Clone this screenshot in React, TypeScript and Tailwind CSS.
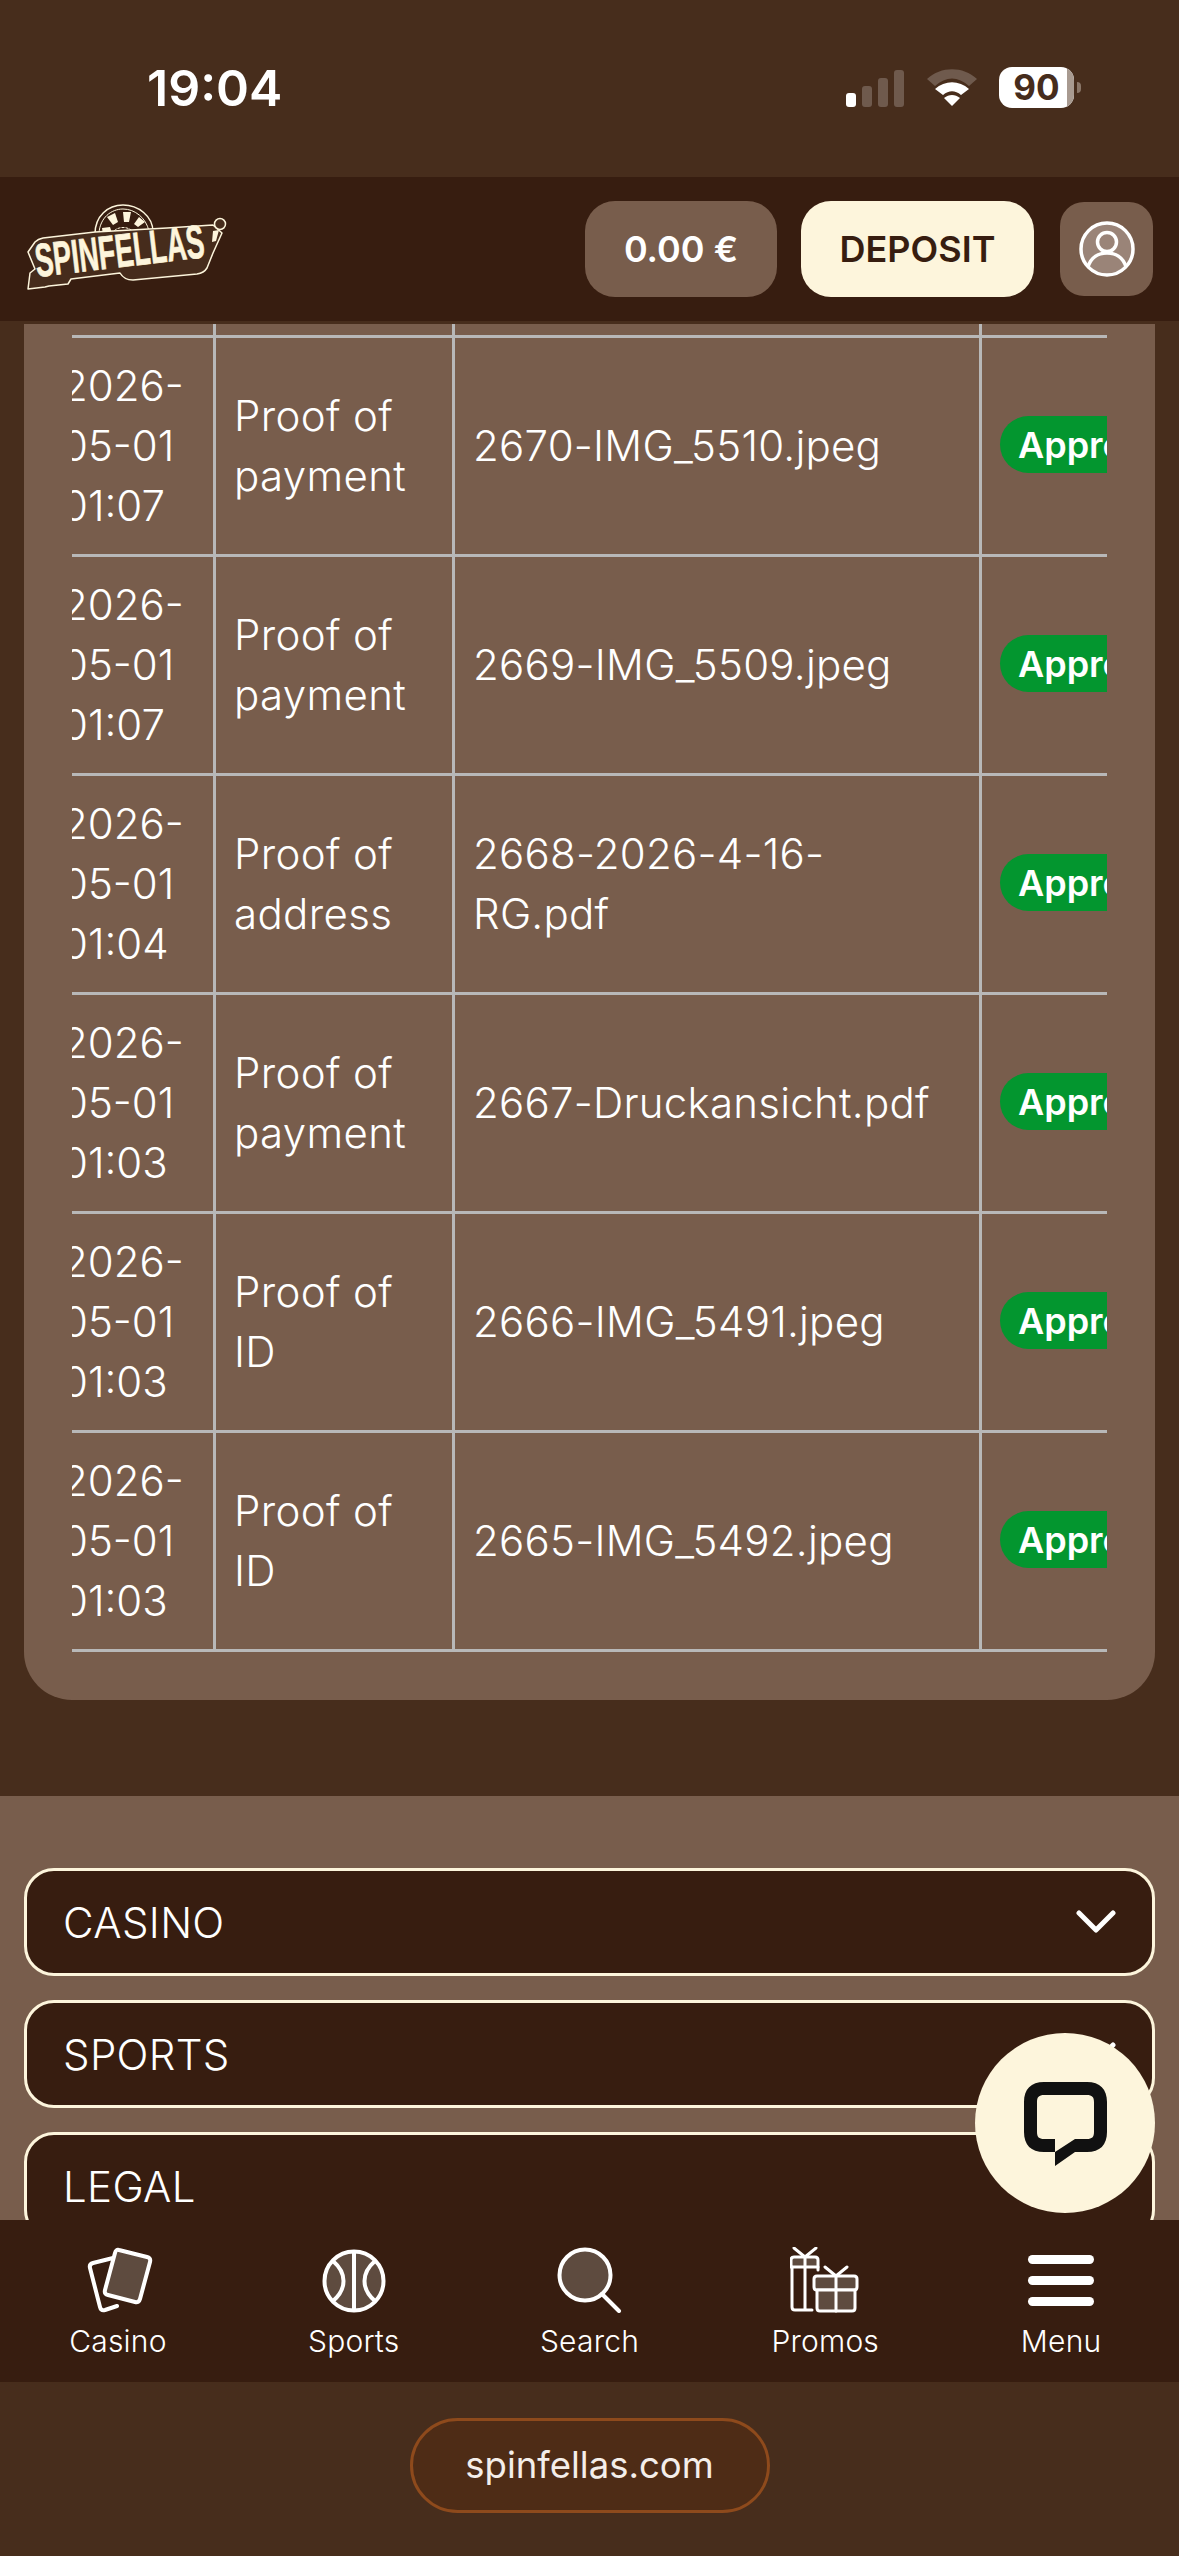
const font = "font-['Inter',sans-serif]";

const rows = [
  { date: "2026-05-01 01:07", type: "Proof of payment", file: ["2670-IMG_5510.jpeg"] },
  { date: "2026-05-01 01:07", type: "Proof of payment", file: ["2669-IMG_5509.jpeg"] },
  { date: "2026-05-01 01:04", type: "Proof of address", file: ["2668-2026-4-16-", "RG.pdf"] },
  { date: "2026-05-01 01:03", type: "Proof of payment", file: ["2667-Druckansicht.pdf"] },
  { date: "2026-05-01 01:03", type: "Proof of ID", file: ["2666-IMG_5491.jpeg"] },
  { date: "2026-05-01 01:03", type: "Proof of ID", file: ["2665-IMG_5492.jpeg"] },
];

function StatusIcons() {
  return (
    <div className="flex items-center">
      <svg width="58" height="38" viewBox="0 0 58 38" className="mr-[23px]">
        <rect x="0" y="24" width="10" height="14" rx="3" fill="#ffffff" />
        <rect x="16" y="17" width="10" height="21" rx="3" fill="#6f5a4d" />
        <rect x="32" y="9" width="10" height="29" rx="3" fill="#6f5a4d" />
        <rect x="48" y="1" width="10" height="37" rx="3" fill="#6f5a4d" />
      </svg>
      <svg width="50" height="38" viewBox="0 0 50 38" className="mr-[22px]">
        <path d="M0 10C14-3 36-3 50 10L42 17C31 7 19 7 8 17Z" fill="#6f5a4d" />
        <path d="M8 20C18 11 32 11 42 20L34 26C28 21 22 21 16 26Z" fill="#ffffff" />
        <path d="M17 29C22 25 28 25 33 29L25 37Z" fill="#ffffff" />
      </svg>
      <div className="relative flex h-[41px] w-[75px] items-center justify-center overflow-hidden rounded-[13px] bg-white">
        <div className="absolute inset-y-0 right-0 w-[7px] bg-[#a89a90]" />
        <span className="relative text-[35px] font-bold leading-none text-[#462c1c]">90</span>
      </div>
      <div className="ml-[3px] h-[11px] w-[4px] rounded-r-full bg-[#8a7668]" />
    </div>
  );
}

function Logo() {
  return (
    <svg width="204" height="90" viewBox="0 0 204 90">
      <path d="M68 30C68 12 81 1 96 1s30 11 30 27z" fill="#371d10" stroke="#fdf5dc" strokeWidth="1.5" />
      <path d="M72 29C73 14 84 5 96 5s23 9 26 22" fill="none" stroke="#fdf5dc" strokeWidth="1" />
      <path d="M75 24l8-1 2 6-9 2zM80 13l8-4 3 9-5 3zM96 8h8l-2 10h-5zM112 13l6 5-7 5-4-3z" fill="#fdf5dc" />
      <path d="M85 30c3-8 17-9 22-1" fill="none" stroke="#fdf5dc" strokeWidth="1" strokeDasharray="3 1" />
      <path
        d="M1 85L3 69L8 65L1 48L8 38Q11 35 16 34L68 28L140 24L186 21L195 29L186 49L180 64Q177 69 170 70L106 76Q97 76 93 69L44 75L41 80L22 82L18 83Z"
        fill="#462c1c"
        stroke="#fdf5dc"
        strokeWidth="1.5"
        strokeLinejoin="round"
      />
      <circle cx="193" cy="20" r="5.5" fill="#462c1c" stroke="#fdf5dc" strokeWidth="1.5" />
      <path d="M186 27l6-1-3 11-4 1z" fill="#fdf5dc" />
      <text
        x="10"
        y="73"
        transform="rotate(-6.7 10 73)"
        textLength="170"
        lengthAdjust="spacingAndGlyphs"
        fontFamily="'Liberation Sans',sans-serif"
        fontWeight="700"
        fontSize="47"
        fill="#fdf5dc"
        stroke="#fdf5dc"
        strokeWidth="0.7"
      >
        SPINFELLAS
      </text>
    </svg>
  );
}

function CasinoIcon() {
  return (
    <svg width="66" height="66" viewBox="0 0 66 66" fill="none" stroke="#ffffff" strokeWidth="4" strokeLinecap="round" strokeLinejoin="round" className="overflow-visible">
      <path d="M28 11L8 16Q4 17 5 21L15 60Q16 64 20 63L32 59" />
      <path d="M34 3L62 10Q66 11 65 15L55 52Q54 56 50 55L23 48Q19 47 20 43L30 6Q31 2 34 3Z" fill="#5e4b3f" />
    </svg>
  );
}

function SportsIcon() {
  return (
    <svg width="66" height="66" viewBox="0 0 66 66" fill="#5e4b3f" stroke="#ffffff" strokeWidth="4">
      <circle cx="33" cy="34" r="29.5" />
      <path d="M33 4v60M12 14c14 12 14 28 0 40M54 14c-14 12-14 28 0 40" fill="none" />
    </svg>
  );
}

function SearchIcon() {
  return (
    <svg width="66" height="66" viewBox="0 0 66 66" stroke="#ffffff" strokeWidth="4" strokeLinecap="round">
      <circle cx="29" cy="28" r="25.5" fill="#5e4b3f" />
      <path d="M46 47l17 17" fill="none" />
    </svg>
  );
}

function PromosIcon() {
  return (
    <svg width="70" height="66" viewBox="0 0 70 66" fill="none" stroke="#ffffff" strokeWidth="3" strokeLinecap="round" strokeLinejoin="round">
      <path d="M4 10H25Q28 10 28 13V20H1V13Q1 10 4 10Z" fill="#5e4b3f" />
      <path d="M2 20V60Q2 63 5 63H22M15 10V63M4 1L15 10L26 1M28 20V23" />
      <path d="M27 29H64Q67 29 67 32V40Q67 43 64 43H27Q24 43 24 40V32Q24 29 27 29Z" fill="#5e4b3f" />
      <path d="M27 43H65V61Q65 64 62 64H30Q27 64 27 61Z" fill="#5e4b3f" />
      <path d="M46 29V64M35 20L46 29L57 20" />
    </svg>
  );
}

function MenuIcon() {
  return (
    <div className="flex h-[66px] w-[66px] flex-col justify-center gap-[12px]">
      <div className="h-[9px] rounded-full bg-white" />
      <div className="h-[9px] rounded-full bg-white" />
      <div className="h-[9px] rounded-full bg-white" />
    </div>
  );
}

function Chevron() {
  return (
    <svg width="40" height="24" viewBox="0 0 40 24" fill="none" stroke="#ffffff" strokeWidth="5" strokeLinecap="round" strokeLinejoin="round">
      <path d="M3 3l17 17L37 3" />
    </svg>
  );
}

const navItems = [
  { label: "Casino", icon: <CasinoIcon /> },
  { label: "Sports", icon: <SportsIcon /> },
  { label: "Search", icon: <SearchIcon /> },
  { label: "Promos", icon: <PromosIcon /> },
  { label: "Menu", icon: <MenuIcon /> },
];

export default function App() {
  return (
    <div className={`relative flex h-[2556px] w-[1179px] flex-col overflow-hidden bg-[#472d1c] text-white ${font}`}>
      {/* Status bar */}
      <div className="flex h-[177px] shrink-0 items-start justify-between pl-[147px] pr-[98px] pt-[61px]">
        <span className="text-[50px] font-semibold leading-[54px]">19:04</span>
        <div className="pt-[6px]">
          <StatusIcons />
        </div>
      </div>

      {/* Header */}
      <header className="flex h-[144px] shrink-0 items-center bg-[#371d10] pl-[27px] pr-[26px]">
        <Logo />
        <div className="ml-auto flex items-center">
          <div className="flex h-[96px] w-[192px] items-center justify-center rounded-[30px] bg-[#785d4c] text-[36px] font-semibold">
            0.00 €
          </div>
          <div className="ml-[24px] flex h-[96px] w-[233px] items-center justify-center rounded-[30px] bg-[#fdf5dc] text-[36px] font-semibold text-[#371d10]">
            DEPOSIT
          </div>
          <div className="ml-[26px] flex h-[94px] w-[93px] items-center justify-center rounded-[24px] bg-[#785d4c]">
            <svg width="56" height="56" viewBox="0 0 56 56" fill="#9a8478" stroke="#ffffff" strokeWidth="3.5">
              <circle cx="28" cy="28" r="26" />
              <circle cx="28" cy="21" r="9.5" fill="none" />
              <path d="M9 46c3-10 11-14 19-14s16 4 19 14" fill="none" />
            </svg>
          </div>
        </div>
      </header>

      {/* Scrolled page content */}
      <main className="min-h-0 flex-1 overflow-hidden pt-[3px]">
        <div className="mx-[24px] rounded-b-[48px] bg-[#785d4c] px-[48px] pb-[48px]">
          <div className="overflow-hidden">
            <table className="-ml-[28px] w-[1104px] table-fixed border-separate border-spacing-0 text-[42px] font-[350] leading-[60px]">
              <colgroup>
                <col className="w-[172px]" />
                <col className="w-[239px]" />
                <col className="w-[527px]" />
                <col className="w-[166px]" />
              </colgroup>
              <tbody>
                <tr>
                  <td className="h-[14px] border-b-[3px] border-r-[3px] border-[#b8b8b8] p-0" />
                  <td className="h-[14px] border-b-[3px] border-r-[3px] border-[#b8b8b8] p-0" />
                  <td className="h-[14px] border-b-[3px] border-r-[3px] border-[#b8b8b8] p-0" />
                  <td className="h-[14px] border-b-[3px] border-[#b8b8b8] p-0" />
                </tr>
                {rows.map((row) => (
                  <tr key={row.file[0]}>
                    <td className="h-[219px] border-b-[3px] border-r-[3px] border-[#b8b8b8] py-0 pl-[18px] pr-[18px] align-middle tracking-[0px]">
                      {row.date}
                    </td>
                    <td className="border-b-[3px] border-r-[3px] border-[#b8b8b8] px-[18px] py-0 align-middle tracking-[0.35px]">
                      {row.type}
                    </td>
                    <td className="border-b-[3px] border-r-[3px] border-[#b8b8b8] px-[18px] py-0 align-middle tracking-[0.25px]">
                      {row.file.map((part) => (
                        <div key={part}>{part}</div>
                      ))}
                    </td>
                    <td className="border-b-[3px] border-[#b8b8b8] py-0 pl-[18px] align-middle">
                      <span className="mb-[3px] flex h-[57px] w-fit items-center rounded-full bg-[#03962f] px-[18px] text-[36px] font-semibold">
                        Approved
                      </span>
                    </td>
                  </tr>
                ))}
              </tbody>
            </table>
          </div>
        </div>

        {/* Footer accordions */}
        <div className="mt-[96px] flex h-[600px] flex-col gap-[24px] bg-[#785d4c] px-[24px] pt-[72px]">
          {["CASINO", "SPORTS", "LEGAL"].map((label) => (
            <div
              key={label}
              className="flex h-[108px] shrink-0 items-center justify-between rounded-[30px] border-[3px] border-[#fdf5dc] bg-[#371d10] pl-[36px] pr-[36px] text-[42px] font-[350] tracking-[0.35px]"
            >
              <span>{label}</span>
              <Chevron />
            </div>
          ))}
        </div>
      </main>

      {/* Bottom nav */}
      <nav className="grid h-[162px] shrink-0 grid-cols-5 bg-[#371d10] pt-[27px]">
        {navItems.map((item) => (
          <div key={item.label} className="flex flex-col items-center">
            {item.icon}
            <span className="mt-[8px] text-[30px] font-[350] leading-[40px] tracking-[0.2px]">{item.label}</span>
          </div>
        ))}
      </nav>

      {/* Browser url pill */}
      <div className="flex h-[174px] shrink-0 items-start justify-center pt-[36px]">
        <div className="flex h-[95px] w-[360px] items-center justify-center rounded-full border-[3px] border-[#8e4a1c] bg-[#4e2c16] text-[36.5px] text-[#f4eeea]">
          spinfellas.com
        </div>
      </div>

      {/* Live chat button */}
      <div className="absolute left-[975px] top-[2033px] flex h-[180px] w-[180px] items-center justify-center rounded-full bg-[#fdf5dc]">
        <svg width="83" height="84" viewBox="0 0 83 84" className="mt-[2px]">
          <path
            d="M20 0H63C76 0 83 7 83 20V50C83 63 76 70 63 70H51L31 84V70H20C7 70 0 63 0 50V20C0 7 7 0 20 0ZM20 13C15 13 13 15 13 20V50C13 55 15 57 20 57H31V70L51 57H63C68 57 70 55 70 50V20C70 15 68 13 63 13Z"
            fill="#111111"
            fillRule="evenodd"
          />
        </svg>
      </div>
    </div>
  );
}
